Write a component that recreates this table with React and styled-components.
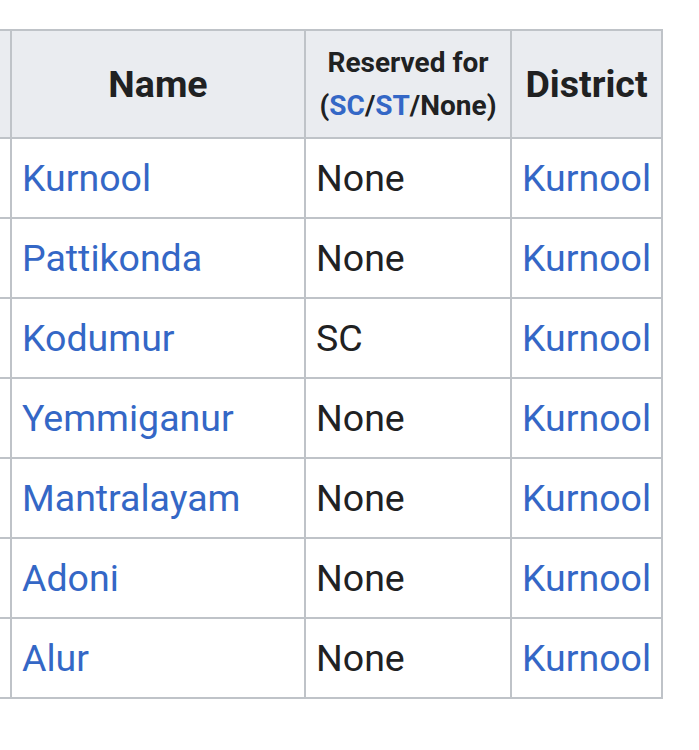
import React from "react";
import styled, { createGlobalStyle } from "styled-components";

const Global = createGlobalStyle`
  html, body { margin: 0; padding: 0; background: #ffffff; }
  body { font-family: Roboto, "Noto Sans", Arial, sans-serif; color: #202122; }
`;

const Page = styled.div`
  width: 699px;
  height: 750px;
  overflow: hidden;
  background: #fff;
  padding-top: 29px;
  box-sizing: border-box;
`;

const Table = styled.table`
  border-collapse: collapse;
  table-layout: fixed;
  margin-left: -203px;
  font-family: Roboto, "Noto Sans", Arial, sans-serif;
  color: #202122;
`;

const Head = styled.th`
  background: #eaecf0;
  border: 2px solid #bfc3c8;
  font-weight: 700;
  font-size: ${(p) => (p.$small ? "28px" : "37.5px")};
  line-height: ${(p) => (p.$small ? "43px" : "44px")};
  height: 106px;
  padding: 0 10px;
  text-align: center;
  vertical-align: middle;
  width: ${(p) => p.$w}px;
  white-space: nowrap;
  overflow: hidden;
`;

const Cell = styled.td`
  border: 2px solid #bfc3c8;
  font-size: 37.5px;
  line-height: 44px;
  height: 78px;
  padding: 0 10px;
  vertical-align: middle;
  white-space: nowrap;
  overflow: hidden;
`;

const Link = styled.a`
  color: #3467c6;
  text-decoration: none;
`;

const rows = [
  ["137", "Kurnool", "None"],
  ["138", "Pattikonda", "None"],
  ["139", "Kodumur", "SC"],
  ["140", "Yemmiganur", "None"],
  ["141", "Mantralayam", "None"],
  ["142", "Adoni", "None"],
  ["143", "Alur", "None"],
];

export default function App() {
  return (
    <Page>
      <Global />
      <Table>
        <thead>
          <tr>
            <Head $small $w={191}>
              Constituency
              <br />
              No.
            </Head>
            <Head $w={272}>Name</Head>
            <Head $small $w={184}>
              Reserved for
              <br />(<Link href="#">SC</Link>/<Link href="#">ST</Link>/None)
            </Head>
            <Head $w={126}>District</Head>
          </tr>
        </thead>
        <tbody>
          {rows.map(([no, name, res]) => (
            <tr key={no}>
              <Cell>{no}</Cell>
              <Cell>
                <Link href="#">{name}</Link>
              </Cell>
              <Cell>{res}</Cell>
              <Cell>
                <Link href="#">Kurnool</Link>
              </Cell>
            </tr>
          ))}
        </tbody>
      </Table>
    </Page>
  );
}
